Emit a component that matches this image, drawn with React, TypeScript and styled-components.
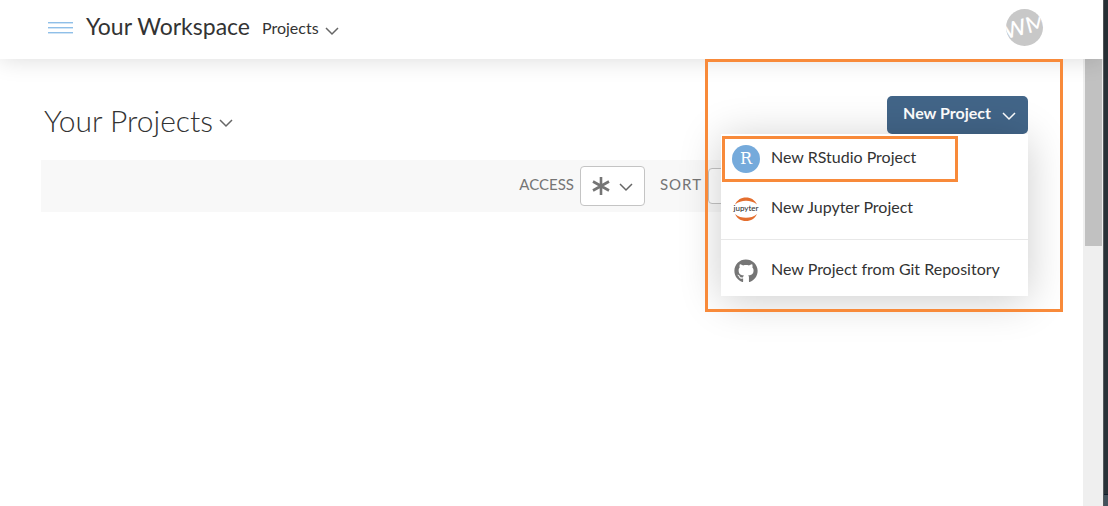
import React from "react";
import styled, { createGlobalStyle } from "styled-components";
import { FaGithub } from "react-icons/fa";

const GlobalStyle = createGlobalStyle`
  *, *::before, *::after { box-sizing: border-box; }
  body { margin: 0; background: #fff; color: #333; font-family: Lato, "Liberation Sans", sans-serif; font-size: 16px; line-height: 20px; }
  button, select { font: inherit; color: inherit; }
  h1, h2, ul { margin: 0; padding: 0; font-weight: 400; list-style: none; }
`;

const Window = styled.div`
  display: flex;
  min-height: 100vh;
`;

const Page = styled.div`
  flex: 1;
  display: flex;
  flex-direction: column;
  min-width: 0;
`;

const WindowEdge = styled.div`
  width: 5px;
  display: flex;
  flex-direction: column;
  justify-content: flex-end;
  background: #293238;
  border-left: 1px solid #555a5d;
`;

const EdgeFooter = styled.div`
  height: 12px;
  background: #43525c;
  border-top: 1px solid #101d2b;
`;

const Header = styled.header`
  display: flex;
  align-items: center;
  height: 59px;
  padding: 0 60px 4px 48px;
  background: #fff;
  box-shadow: 0 0 24px rgba(0, 0, 0, 0.15);
  position: relative;
  z-index: 1;
`;

const PlainButton = styled.button`
  display: flex;
  align-items: center;
  gap: 6px;
  padding: 0;
  border: 0;
  background: none;
  cursor: pointer;
`;

const MenuToggle = styled(PlainButton)`
  margin-right: 12px;
`;

const WorkspaceName = styled.h1`
  margin-right: 12px;
  padding-bottom: 4px;
  font-size: 23px;
  line-height: 28px;
`;

const Avatar = styled.button`
  display: flex;
  align-items: center;
  justify-content: center;
  width: 37px;
  height: 37px;
  margin-left: auto;
  padding: 0 0 4px;
  border: 0;
  border-radius: 50%;
  overflow: hidden;
  background: #c8c8c8;
  color: #fff;
  font-size: 22px;
  font-weight: 500;
`;

const Initials = styled.span`
  transform: rotate(-15deg);
`;

const Body = styled.div`
  flex: 1;
  display: flex;
`;

const Content = styled.main`
  flex: 1;
  min-width: 0;
  padding: 37px 55px 0 41px;
`;

const TitleRow = styled.div`
  display: flex;
  justify-content: space-between;
  margin-bottom: 26px;
`;

const TitleButton = styled(PlainButton)`
  padding: 0 3px;
  height: 48px;
  margin-bottom: -10px;
`;

const Title = styled.h2`
  font-size: 30px;
  font-weight: 300;
  line-height: 36px;
`;

const NewProject = styled.div`
  position: relative;
  z-index: 2;
`;

const NewProjectButton = styled.button`
  display: flex;
  align-items: center;
  gap: 11px;
  height: 38px;
  padding: 0 12px 4px 16px;
  border: 0;
  border-radius: 5px;
  background: #426588;
  color: #fff;
  font-weight: 700;
`;

const Menu = styled.ul`
  position: absolute;
  top: 38px;
  right: 0;
  width: 307px;
  background: #fff;
  box-shadow: 0 4px 40px rgba(0, 0, 0, 0.2);
`;

const MenuItem = styled.li<{ $divided?: boolean }>`
  position: relative;
  margin-top: ${(p) => (p.$divided ? "5px" : "0")};
  padding-top: ${(p) => (p.$divided ? "6px" : "0")};
  border-top: ${(p) => (p.$divided ? "1px solid #e8e8e8" : "0")};
`;

const MenuAction = styled(PlainButton)`
  width: 100%;
  height: 50px;
  padding: 0 11px;
  gap: 11px;
`;

const MenuLabel = styled.span`
  padding-bottom: 5px;
`;

const Callout = styled.div<{ $inset: string }>`
  position: absolute;
  inset: ${(p) => p.$inset};
  border: 3px solid #f88a3a;
  pointer-events: none;
`;

const FilterBar = styled.div`
  display: flex;
  align-items: center;
  justify-content: flex-end;
  height: 52px;
  padding-right: 8px;
  background: #f8f8f8;
  color: #757575;
`;

const FilterLabel = styled.label<{ $wide?: boolean }>`
  margin: 0 6px 4px 15px;
  font-size: 15px;
  letter-spacing: ${(p) => (p.$wide ? "1px" : "0")};
`;

const SelectBox = styled.div`
  position: relative;
`;

const Select = styled.select<{ $width: number; $height: number }>`
  display: block;
  appearance: none;
  width: ${(p) => p.$width}px;
  height: ${(p) => p.$height}px;
  border: 1px solid #c4c4c4;
  border-radius: 4px;
  background: #fff;
`;

const SelectFace = styled.span`
  position: absolute;
  inset: 0;
  display: flex;
  align-items: center;
  justify-content: center;
  gap: 9px;
  pointer-events: none;
`;

const ScrollTrack = styled.div`
  width: 20px;
  padding: 0 1px 0 2px;
  background: #efefef;
`;

const ScrollThumb = styled.div`
  height: 187px;
  background: #c1c1c1;
`;

const ChevronSvg = styled.svg<{ $low?: boolean }>`
  flex: none;
  margin-top: ${(p) => (p.$low ? "4px" : "0")};
`;

const Chevron = ({ color = "#666", low }: { color?: string; low?: boolean }) => (
  <ChevronSvg $low={low} width="14" height="14" viewBox="0 0 14 14" fill="none" stroke={color} strokeWidth="1.5" aria-hidden="true">
    <path d="M1 5l6 6 6-6" />
  </ChevronSvg>
);

const HamburgerIcon = () => (
  <svg width="26" height="12" viewBox="0 0 26 12" aria-hidden="true">
    <path d="M0 .5h25M0 5.500h25M0 10.500h25" stroke="#8fbfe8" />
    <path d="M0 1.500h25M0 6.500h25M0 11.500h25" stroke="#d0e4f5" />
  </svg>
);

const AsteriskIcon = () => (
  <svg width="18" height="18" viewBox="0 0 18 18" stroke="#757575" strokeWidth="2.600" aria-hidden="true">
    <path d="M9 0v18M1 4.500l16 9M1 13.500l16-9" />
  </svg>
);

const RStudioIcon = () => (
  <svg width="28" height="28" viewBox="0 0 28 28" aria-hidden="true">
    <circle cx="14" cy="14" r="14" fill="#75aadb" />
    <text x="14" y="19" textAnchor="middle" fill="#fff" fontFamily="DejaVu Serif, serif" fontSize="16">R</text>
  </svg>
);

const JupyterIcon = () => (
  <svg width="28" height="28" viewBox="0 0 28 28" aria-hidden="true">
    <path d="M3 9.500C5 5 9 2.400 14 2.400S23 5 25 9.500C22 6.800 18 5.700 14 5.700S6 6.800 3 9.500z" fill="#e46e2e" />
    <path d="M3 18.900c2 4.500 6 7.100 11 7.100s9-2.600 11-7.100c-3 2.700-7 3.800-11 3.800S6 21.600 3 18.900z" fill="#e46e2e" />
    <text x="14" y="16" textAnchor="middle" fill="#333" fontFamily="Lato, sans-serif" fontWeight="500" fontSize="8">jupyter</text>
  </svg>
);

const GitHubIcon = styled(FaGithub)`
  flex: none;
  width: 28px;
  height: 24px;
  color: #757575;
`;

export default function App() {
  return (
    <Window>
      <GlobalStyle />
      <Page>
        <Header>
          <MenuToggle aria-label="Open navigation"><HamburgerIcon /></MenuToggle>
          <WorkspaceName>Your Workspace</WorkspaceName>
          <PlainButton aria-haspopup="menu">Projects <Chevron low /></PlainButton>
          <Avatar aria-label="Account"><Initials>WM</Initials></Avatar>
        </Header>
        <Body>
          <Content>
            <TitleRow>
              <TitleButton aria-haspopup="menu">
                <Title>Your Projects</Title>
                <Chevron low />
              </TitleButton>
              <NewProject>
                <NewProjectButton aria-haspopup="menu" aria-expanded="true">
                  New Project <Chevron color="#fff" low />
                </NewProjectButton>
                <Menu>
                  <MenuItem>
                    <MenuAction><RStudioIcon /><MenuLabel>New RStudio Project</MenuLabel></MenuAction>
                    <Callout $inset="2px 70px 2px 1px" />
                  </MenuItem>
                  <MenuItem>
                    <MenuAction><JupyterIcon /><MenuLabel>New Jupyter Project</MenuLabel></MenuAction>
                  </MenuItem>
                  <MenuItem $divided>
                    <MenuAction><GitHubIcon aria-hidden="true" /><MenuLabel>New Project from Git Repository</MenuLabel></MenuAction>
                  </MenuItem>
                  <Callout $inset="-75px -35px -16px -16px" />
                </Menu>
              </NewProject>
            </TitleRow>
            <FilterBar>
              <FilterLabel htmlFor="access">ACCESS</FilterLabel>
              <SelectBox>
                <Select id="access" $width={65} $height={40}><option value="all" aria-label="All" /></Select>
                <SelectFace><AsteriskIcon /><Chevron /></SelectFace>
              </SelectBox>
              <FilterLabel htmlFor="sort" $wide>SORT</FilterLabel>
              <Select id="sort" $width={312} $height={36}><option value="name" aria-label="Name" /></Select>
            </FilterBar>
          </Content>
          <ScrollTrack><ScrollThumb /></ScrollTrack>
        </Body>
      </Page>
      <WindowEdge><EdgeFooter /></WindowEdge>
    </Window>
  );
}
